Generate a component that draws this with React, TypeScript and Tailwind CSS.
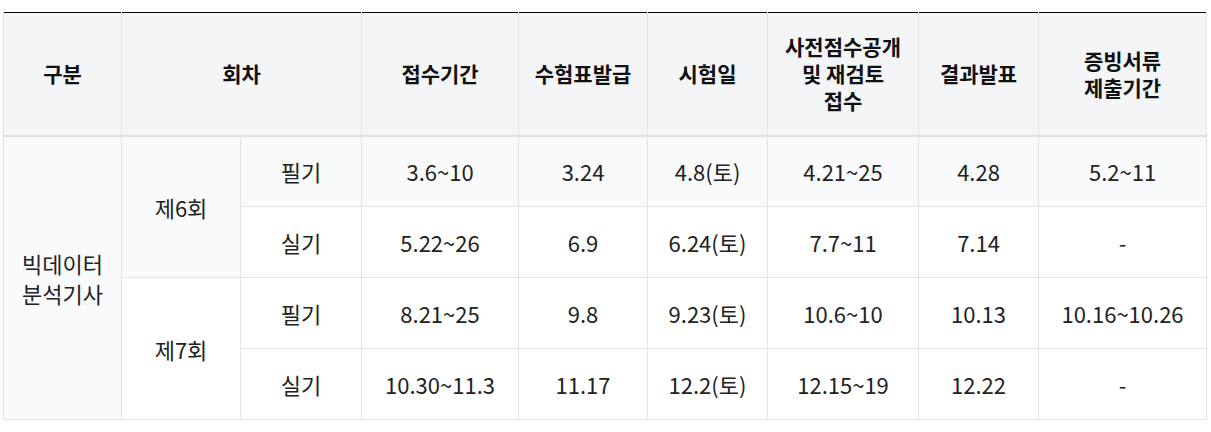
const FONT = { fontFamily: '"Noto Sans CJK KR", "Noto Sans", sans-serif' };

type Row = {
  round?: string;
  kind: string;
  cells: string[];
  shaded?: boolean;
};

const ROWS: Row[] = [
  { round: "제6회", kind: "필기", cells: ["3.6~10", "3.24", "4.8(토)", "4.21~25", "4.28", "5.2~11"], shaded: true },
  { kind: "실기", cells: ["5.22~26", "6.9", "6.24(토)", "7.7~11", "7.14", "-"] },
  { round: "제7회", kind: "필기", cells: ["8.21~25", "9.8", "9.23(토)", "10.6~10", "10.13", "10.16~10.26"] },
  { kind: "실기", cells: ["10.30~11.3", "11.17", "12.2(토)", "12.15~19", "12.22", "-"] },
];

const td = "border border-[#e2e4e7] text-center align-middle font-normal";
const th = "border-x border-[#e2e4e7] border-b-2 border-b-[#dfe1e4]";

export default function App() {
  return (
    <div className="min-h-screen bg-white pl-[3px] pt-[12px]" style={FONT}>
      <table className="w-[1203px] table-fixed border-collapse border-t border-t-black text-[#222]">
        <colgroup>
          <col className="w-[118px]" />
          <col className="w-[119px]" />
          <col className="w-[121px]" />
          <col className="w-[157px]" />
          <col className="w-[129px]" />
          <col className="w-[120px]" />
          <col className="w-[151px]" />
          <col className="w-[120px]" />
          <col className="w-[168px]" />
        </colgroup>
        <thead>
          <tr className="h-[123px] bg-[#f4f5f7] text-[21px] leading-[27px] font-bold text-[#111]">
            <th className={th}>구분</th>
            <th colSpan={2} className={th}>회차</th>
            <th className={th}>접수기간</th>
            <th className={th}>수험표발급</th>
            <th className={th}>시험일</th>
            <th className={th}>
              사전점수공개
              <br />및 재검토
              <br />접수
            </th>
            <th className={th}>결과발표</th>
            <th className={th}>
              증빙서류
              <br />제출기간
            </th>
          </tr>
        </thead>
        <tbody className="text-[22px] leading-[30px]">
          {ROWS.map((r, i) => (
            <tr key={i} className={r.shaded ? "h-[71px] bg-[#f9fafc]" : "h-[71px] bg-white"}>
              {i === 0 && (
                <td rowSpan={4} className={td}>
                  빅데이터
                  <br />
                  분석기사
                </td>
              )}
              {r.round && (
                <td rowSpan={2} className={td}>
                  {r.round}
                </td>
              )}
              <td className={td}>{r.kind}</td>
              {r.cells.map((c, j) => (
                <td key={j} className={td}>
                  {c}
                </td>
              ))}
            </tr>
          ))}
        </tbody>
      </table>
    </div>
  );
}
